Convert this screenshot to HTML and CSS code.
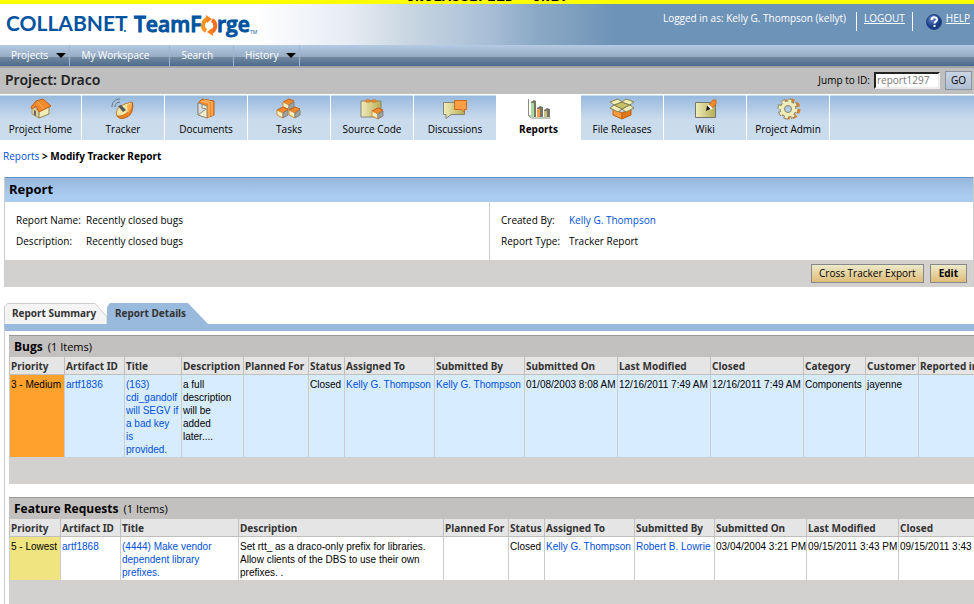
FILE: index.html
```html
<!DOCTYPE html>
<html lang="en">
<head>
<meta charset="utf-8">
<title>Modify Tracker Report</title>
<link rel="stylesheet" href="styles.css">
</head>
<body>
<div class="banner"><span>UNCLASSIFIED&nbsp; ONLY</span></div>
<header class="masthead">
  <svg class="logo" width="258" height="41" viewBox="0 0 258 41" role="img" aria-label="CollabNet TeamForge">
    <g class="logo-collab"><text x="6" y="27">COLLABNET</text></g>
    <circle cx="125" cy="27" r="1" fill="#00539f"/>
    <g class="logo-team"><text x="134" y="28">TeamF</text><text x="217" y="28">rge</text></g>
    <g fill="none" stroke-width="4"><path d="M208 15A6 6.500 0 0 0 206 27" stroke="#f7941d"/><path d="M211 28A6 6.500 0 0 0 212 16" stroke="#f36f21"/></g>
    <path d="M206 11l6 4-5 4zM213 32l-6-4 5-4z" fill="#f5821f"/>
    <g class="logo-tm"><text x="250" y="30">TM</text></g>
  </svg>
  <div class="account">
    <span class="who">Logged in as: Kelly G. Thompson (kellyt)</span>
    <a class="logout" href="#">LOGOUT</a>
    <a class="help" href="#"><svg width="16" height="16" viewBox="0 0 16 16" aria-hidden="true"><defs><radialGradient id="ball" cx=".4" cy=".3"><stop stop-color="#6f8fd0"/><stop offset="1" stop-color="#173a85"/></radialGradient></defs><circle cx="8" cy="8" r="7.500" fill="url(#ball)" stroke="#24447f"/><path d="M5.500 6c0-3.500 5.500-3.500 5.500-.5 0 2-2.500 2-2.500 4M8.500 11v2" fill="none" stroke="#fff" stroke-width="2"/></svg><span>HELP</span></a>
  </div>
</header>
<nav class="menu">
  <a class="drop" href="#">Projects</a><a href="#">My Workspace</a><a href="#">Search</a><a class="drop" href="#">History</a>
</nav>
<div class="project">
  <h1>Project: Draco</h1>
  <form class="jump"><label for="jump">Jump to ID:</label><input id="jump" type="text" placeholder="report1297"><button type="button">GO</button></form>
</div>
<nav class="tools">
  <a href="#"><svg width="26" height="22" viewBox="0 0 26 22"><path d="M5 8l6 5v7l-7-4v-6z" fill="#ddd09a" stroke="#a89868"/><path d="M11 13l10-4v7l-10 4z" fill="#f2edb8" stroke="#8f8650"/><path d="M3 9l5-6 7-2 8 7-12 6-3-6-4 3z" fill="#f28a2c" stroke="#c06018"/><path d="M9 3l7 8" stroke="#ffb066"/><path d="M6 12l2 1v5l-2-1z" fill="#666"/></svg>Project Home</a>
  <a href="#"><svg width="26" height="22" viewBox="0 0 26 22"><path d="M22 4c2 5 0 13-5 15-4 2-8 2-10-1z" fill="#f08020" stroke="#b55c12"/><path d="M7 18C5 12 8 7 22 4c0 7-6 15-15 14z" fill="#f0e6a4" stroke="#c4762a"/><path d="M17 7c3-1 4-2 5-2 0 4-1 7-4 10z" fill="#ffad52"/><path d="M8 8l3-1 5 5-3 2z" fill="#555"/><path d="M2 9c0-5 3-8 8-8M5 9c0-3 2-5 5-5" fill="none" stroke="#65727e"/></svg>Tracker</a>
  <a href="#"><svg width="26" height="22" viewBox="0 0 26 22"><path d="M5 5l4-4 12 2v14l-7 3z" fill="#f28a2c" stroke="#c06018"/><path d="M8 3l8 2v15M11 2l8 2v14" fill="none" stroke="#ffc078"/><path d="M5 5l9 3v12l-9-3z" fill="#eeecc9" stroke="#8b8b7d"/><path d="M5 5l4 1v4l4 1-8 6z" fill="#d3dde3" stroke="#8b8b7d"/></svg>Documents</a>
  <a href="#"><svg width="26" height="22" viewBox="0 0 26 22"><g id="cube"><path d="M7 4l6-3 5 2-5 4z" fill="#f28a2c" stroke="#c06018"/><path d="M7 4l6 3v5l-6-3z" fill="#f5f0c0" stroke="#d98a3a"/><path d="M13 7l5-3v5l-5 3z" fill="#a2a29c" stroke="#858580"/></g><use href="#cube" x="-6" y="8"/><use href="#cube" x="6" y="8"/></svg>Tasks</a>
  <a href="#"><svg width="26" height="22" viewBox="0 0 26 22"><defs><linearGradient id="sand"><stop stop-color="#f1edbb"/><stop offset="1" stop-color="#b5ad55"/></linearGradient></defs><path d="M2 3h20v16H2z" fill="url(#sand)" stroke="#858575"/><path d="M7 2h4v2H7zM13 2h4v2h-4z" fill="#ff9d45" stroke="#d0721f"/><use href="#cube" x="6" y="9"/></svg>Source Code</a>
  <a href="#"><svg width="26" height="22" viewBox="0 0 26 22"><path d="M1.500 4.500h21v12H9l-5 4v-4H1.500z" fill="url(#sand)" stroke="#858575"/><path d="M12.500 2.500h12v9h-2v3l-3-3h-7z" fill="#ff9d45" stroke="#c96a20"/></svg>Discussions</a>
  <a class="active" href="#" aria-current="page"><svg width="26" height="22" viewBox="0 0 26 22"><path d="M2.500 1v17l3 2h19M3 18h3" fill="none" stroke="#8c8c80"/><path d="M5 4l3-2 2 1v16H5zM11 10l3-2 3 1v10h-6zM18 12l3-2 3 1v8h-6z" fill="#777565"/><path d="M5 5h3v14H5z" fill="#a9dba0"/><path d="M11 11h3v8h-3z" fill="#ff9c45"/><path d="M18 13h3v6h-3z" fill="#c5c084"/></svg>Reports</a>
  <a href="#"><svg width="26" height="22" viewBox="0 0 26 22"><path d="M4 11l9 4v6l-9-4z" fill="#ff9c3f" stroke="#c06018"/><path d="M13 15l9-4v6l-9 4z" fill="#e47618" stroke="#c06018"/><path d="M5 7l8-3 8 3-8 4z" fill="#c9c064" stroke="#858052"/><path d="M5 7L1 4l8-3 4 3zM21 7l4-3-8-3-4 3zM5 7l-4 3 8 4 4-3zM21 7l4 3-8 4-4-3z" fill="#f1edbb" stroke="#858052"/></svg>File Releases</a>
  <a href="#"><svg width="26" height="22" viewBox="0 0 26 22"><path d="M3.500 4.500h20v15h-20z" fill="url(#sand)" stroke="#75756c"/><path d="M14 13l1-5 5-2-2 5z" fill="#111"/><path d="M17 7l4-5h3v4l-4 4z" fill="#f28a2c" stroke="#c96a20"/><path d="M16 7l4 4" stroke="#fff" stroke-width="2"/></svg>Wiki</a>
  <a href="#"><svg width="26" height="22" viewBox="0 0 26 22"><g fill="none"><circle cx="15" cy="11" r="8.500" stroke="#e47c22" stroke-width="4" stroke-dasharray="4 2.670"/><circle cx="13" cy="11" r="8.500" stroke="#8d886b" stroke-width="4" stroke-dasharray="4 2.670"/><circle cx="13" cy="11" r="6" stroke="#8d886b" stroke-width="5"/><circle cx="13" cy="11" r="8" stroke="#f1edbb" stroke-width="3" stroke-dasharray="3 3.280"/><circle cx="13" cy="11" r="5.500" stroke="#f1edbb" stroke-width="4"/><circle cx="13" cy="11" r="3.500" stroke="#8d886b"/></g></svg>Project Admin</a>
</nav>
<main>
  <div class="crumbs"><a href="#">Reports</a> <b>&gt; Modify Tracker Report</b></div>
  <section class="report">
    <h2>Report</h2>
    <div class="facts">
      <dl><dt>Report Name:</dt><dd>Recently closed bugs</dd><dt>Description:</dt><dd>Recently closed bugs</dd></dl>
      <dl><dt>Created By:</dt><dd><a href="#">Kelly G. Thompson</a></dd><dt>Report Type:</dt><dd>Tracker Report</dd></dl>
    </div>
    <div class="actions"><button type="button">Cross Tracker Export</button><button class="strong" type="button">Edit</button></div>
  </section>
  <div class="tabs">
    <a href="#"><svg viewBox="0 0 104 21" preserveAspectRatio="none" aria-hidden="true"><path d="M.5 21V4l3-3.500H92L104 14v7" fill="#f4f4f4" stroke="#ccc"/></svg><span>Report Summary</span></a>
    <a href="#" class="current"><svg viewBox="0 0 101 21" preserveAspectRatio="none" aria-hidden="true"><path d="M0 21V4l3-4h78l20 21z" fill="#99badd"/></svg><span>Report Details</span></a>
  </div>
  <div class="panel">
    <section class="list">
      <h3>Bugs <span>(1 Items)</span></h3>
      <table>
        <colgroup><col class="w55"><col class="w60"><col class="w57"><col class="w62"><col class="w65"><col class="w36"><col class="w90"><col class="w90"><col class="w93"><col class="w93"><col class="w93"><col class="w62"><col class="w53"><col class="w90"></colgroup>
        <thead><tr><th>Priority</th><th>Artifact ID</th><th>Title</th><th>Description</th><th>Planned For</th><th>Status</th><th>Assigned To</th><th>Submitted By</th><th>Submitted On</th><th>Last Modified</th><th>Closed</th><th>Category</th><th>Customer</th><th>Reported in</th></tr></thead>
        <tbody><tr class="blue"><td class="medium">3 - Medium</td><td><a href="#">artf1836</a></td><td class="wrap"><a href="#">(163)<br>cdi_gandolf will SEGV if a bad key<br>is<br>provided.</a></td><td class="wrap">a full description will be<br>added later....</td><td></td><td>Closed</td><td><a href="#">Kelly G. Thompson</a></td><td><a href="#">Kelly G. Thompson</a></td><td>01/08/2003 8:08 AM</td><td>12/16/2011 7:49 AM</td><td>12/16/2011 7:49 AM</td><td>Components</td><td>jayenne</td><td></td></tr></tbody>
      </table>
    </section>
    <section class="list">
      <h3>Feature Requests <span>(1 Items)</span></h3>
      <table>
        <colgroup><col class="w51"><col class="w60"><col class="w118"><col class="w205"><col class="w65"><col class="w36"><col class="w90"><col class="w80"><col class="w92"><col class="w92"><col class="w92"></colgroup>
        <thead><tr><th>Priority</th><th>Artifact ID</th><th>Title</th><th>Description</th><th>Planned For</th><th>Status</th><th>Assigned To</th><th>Submitted By</th><th>Submitted On</th><th>Last Modified</th><th>Closed</th></tr></thead>
        <tbody><tr><td class="lowest">5 - Lowest</td><td><a href="#">artf1868</a></td><td class="wrap"><a href="#">(4444) Make vendor<br>dependent library<br>prefixes.</a></td><td class="wrap">Set rtt_ as a draco-only prefix for libraries.<br>Allow clients of the DBS to use their own<br>prefixes. .</td><td></td><td>Closed</td><td><a href="#">Kelly G. Thompson</a></td><td><a href="#">Robert B. Lowrie</a></td><td>03/04/2004 3:21 PM</td><td>09/15/2011 3:43 PM</td><td>09/15/2011 3:43</td></tr></tbody>
      </table>
    </section>
  </div>
</main>
</body>
</html>
```

FILE: styles.css
```css
* { box-sizing: border-box; }
html { overflow: hidden; }
body { margin: 0; background: #fff; color: #000; font: 10px/13px "Open Sans", "Noto Sans", sans-serif; }
a { color: #0050d8; text-decoration: none; }
h1, h2, h3, dl, dd { margin: 0; }
button, input { font: inherit; }

.banner { display: flex; justify-content: center; align-items: flex-end; height: 4px; overflow: hidden; background: #ff0; font: bold 15px/12px "Liberation Mono", monospace; }

.masthead { display: flex; justify-content: space-between; height: 41px; background: linear-gradient(90deg, #fff 0, #fff 26%, #e6ebf3 36%, #c8d6e1 42%, #a9bfd7 50%, #8ba9c6 55%, #7a9cbb 60%, #6e93b8 63%); }
.logo-collab { font: bold 21px Lato, sans-serif; fill: #00539f; }
.logo-team { font: 600 21px "Open Sans", sans-serif; fill: #00539f; stroke: #00539f; stroke-width: 1px; }
.logo-tm { font: 5px "Open Sans", sans-serif; fill: #00539f; }
.account { display: flex; align-items: flex-start; padding: 8px 4px 0 0; color: #fff; }
.account a { color: #fff; text-decoration: underline; }
.who { margin-right: 10px; }
.logout { padding: 0 7px 6px; border: solid #fff; border-width: 0 1px; margin-right: 13px; }
.help { display: flex; gap: 4px; }
.help svg { margin-top: 2px; }

.menu { display: flex; height: 21px; background: linear-gradient(#b5cae4, #94abc3 57%, #70899f 58%, #536f8f 94%, #44699c); }
.menu a { padding: 4px 20px 4px 11px; border-right: 1px solid #9fb6d1; color: #fff; }
.menu .drop::after { content: ""; display: inline-block; margin: 0 -17px 1px 8px; border: solid transparent; border-width: 5px 5px 0; border-top-color: #000; }

.project { display: flex; justify-content: space-between; align-items: center; height: 28px; padding: 0 2px 2px 5px; border-top: 2px solid #a5a5a5; background: #bfbfbf; }
.project h1 { font: 600 14px/18px "Noto Sans", sans-serif; color: #222; }
.jump { display: flex; align-items: center; }
.jump input { width: 66px; height: 17px; margin: 0 5px 0 4px; padding: 0 1px; border: 2px solid #eee; border-top-color: #222; border-left-color: #222; background: #fff; }
.jump input::placeholder { color: #777; }
.jump button { width: 27px; height: 19px; padding: 0; border: 1px solid #8a94a0; background: linear-gradient(#c9d5e4, #aebfd4); }

.tools { display: flex; height: 46px; background: linear-gradient(#fff 1px, #98bade 2px, #c9dbec 55%, #cbdcec); }
.tools a { display: flex; flex-direction: column; align-items: center; width: 83px; padding-top: 4px; border-right: 1px solid #fff; color: #000; line-height: 19px; }
.tools a:first-child { width: 82px; }
.tools .active { width: 84px; background: #fff; font-weight: bold; }

.crumbs { padding: 10px 3px 14px; }
.crumbs b { font-family: "Noto Sans", sans-serif; }
.report { margin-left: 4px; border: solid #ccc; border-width: 0 1px; }
.report h2 { height: 25px; padding: 0 4px; border-top: 1px solid #6392c3; background: linear-gradient(#97b8dc, #aaccf0 75%); font: bold 13px/23px "Open Sans", sans-serif; }
.facts { display: grid; grid-template-columns: 1fr 1fr; }
.facts dl { display: grid; grid-template-columns: 70px 1fr; row-gap: 8px; padding: 12px 11px; }
.facts dl + dl { grid-template-columns: 68px 1fr; border-left: 1px solid #ccc; }
.actions { display: flex; justify-content: flex-end; gap: 6px; height: 27px; padding: 4px 6px; background: #d2d1cf; }
.actions button { height: 19px; padding: 0 7px; border: 1px solid #888; background: linear-gradient(#ece9cb, #e6d3a0 50%, #dfbb78); line-height: 15px; }
.actions .strong { padding: 0 8px; font-weight: bold; }

.tabs { display: flex; margin: 16px 0 0 4px; }
.tabs a { position: relative; height: 21px; width: 103px; padding: 4px 8px; color: #333; font: bold 10px/13px "Noto Sans", sans-serif; white-space: nowrap; }
.tabs .current { width: 101px; }
.tabs svg { position: absolute; inset: 0; width: 100%; height: 100%; }
.tabs span { position: relative; }

.panel { margin-left: 4px; padding: 4px 0 0 4px; border: solid #ccc; border-width: 0 0 0 1px; border-top: 7px solid #99badd; }
.list { margin-bottom: 13px; padding-bottom: 27px; overflow: hidden; border-top: 1px solid #999; background: #d2d1cf; }
.list h3 { height: 21px; padding: 0 5px; background: #c3c1bf; font: bold 12px/21px "Open Sans", sans-serif; }
.list h3 span { margin-left: 2px; font-size: 11px; font-weight: normal; }
table { width: 100%; table-layout: fixed; border-collapse: separate; border-spacing: 0; }
th, td { border-left: 1px solid #ccc; text-align: left; vertical-align: top; white-space: nowrap; }
th { height: 18px; padding: 3px 1px 1px; border-color: #c0bfbd; border-bottom: 1px solid #c0bfbd; background: #e5e5e5; color: #333; font-family: "Noto Sans", sans-serif; }
td { padding: 3px 0 1px 1px; background: #fff; font-family: "Liberation Sans", sans-serif; }
td.wrap { white-space: normal; }
.blue td { background: #d8ecff; }
.blue td.medium { background: #ffa22d; }
td.lowest { background: #efe47f; }
.w36 { width: 36px; } .w51 { width: 51px; } .w53 { width: 53px; } .w55 { width: 55px; } .w57 { width: 57px; }
.w60 { width: 60px; } .w62 { width: 62px; } .w65 { width: 65px; } .w80 { width: 80px; } .w90 { width: 90px; }
.w92 { width: 92px; } .w93 { width: 93px; } .w118 { width: 118px; } .w205 { width: 205px; }
```
